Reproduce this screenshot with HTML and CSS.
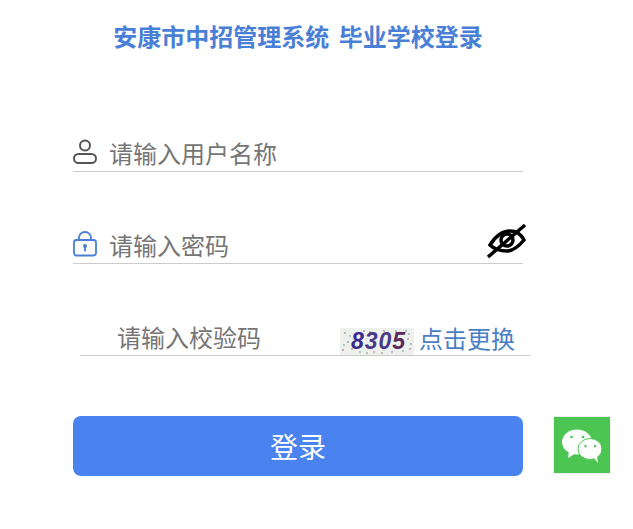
FILE: index.html
```html
<!DOCTYPE html>
<html lang="zh-CN">
<head>
    <meta charset="UTF-8">
    <title>安康市中招管理系统 毕业学校登录</title>
    <link rel="stylesheet" href="styles.css">
</head>
<body>

<h1 class="title">安康市中招管理系统 毕业学校登录</h1>

<div class="field field-user">
    <svg class="field-icon" width="24" height="26" viewBox="0 0 24 26" fill="none" stroke="#555" stroke-width="2">
        <circle cx="12" cy="6.500" r="5"/>
        <rect x="1" y="15" width="22" height="9" rx="4.500"/>
    </svg>
    <span class="placeholder">请输入用户名称</span>
</div>

<div class="field field-pass">
    <svg class="field-icon" width="24" height="26" viewBox="0 0 24 26" fill="none" stroke="#4a7fd8" stroke-width="1.8">
        <path d="M6 9V6.500a6 5.500 0 0 1 12 0V9"/>
        <rect x="1" y="9" width="22" height="15.500" rx="2.500"/>
        <circle cx="12" cy="15" r="2" fill="#4a7fd8" stroke="none"/>
        <path d="M12 16V20.500"/>
    </svg>
    <span class="placeholder">请输入密码</span>
    <svg class="eye" width="42" height="36" viewBox="0 0 42 36" fill="none" stroke="#000">
        <path d="M4 22C9 14 16 8 24 8c6 0 11 3 14 9-5 6-10 11-17 11-7 0-13-2-17-6z" stroke-width="3.500"/>
        <circle cx="21" cy="17" r="6" stroke-width="3.500"/>
        <path d="M2 34L39 2" stroke-width="3.500"/>
    </svg>
</div>

<div class="field field-code">
    <span class="placeholder">请输入校验码</span>
    <div class="captcha">
        <svg class="captcha-noise" width="74" height="27" viewBox="0 0 74 27">
            <g fill="#b79fa8">
                <circle cx="5" cy="5" r="1"/><circle cx="12" cy="21" r="1"/><circle cx="8" cy="14" r="1"/>
                <circle cx="3" cy="22" r="1"/><circle cx="17" cy="6" r="1"/><circle cx="24" cy="3" r="1"/>
                <circle cx="34" cy="24" r="1"/><circle cx="44" cy="3" r="1"/><circle cx="52" cy="24" r="1"/>
                <circle cx="60" cy="5" r="1"/><circle cx="68" cy="11" r="1"/><circle cx="70" cy="21" r="1"/>
            </g>
            <g fill="#9fb79f">
                <circle cx="66" cy="3" r="1"/><circle cx="63" cy="23" r="1"/><circle cx="30" cy="4" r="1"/>
                <circle cx="20" cy="24" r="1"/><circle cx="15" cy="12" r="1"/><circle cx="71" cy="16" r="1"/>
                <circle cx="10" cy="8" r="1"/><circle cx="4" cy="17" r="1"/><circle cx="42" cy="25" r="1"/>
                <circle cx="56" cy="3" r="1"/><circle cx="69" cy="6" r="1"/><circle cx="27" cy="25" r="1"/>
            </g>
        </svg>
        <span class="captcha-text"><span class="digit-a">8</span><span class="digit-b">3</span><span class="digit-b">0</span><span class="digit-c">5</span></span>
    </div>
    <a class="refresh">点击更换</a>
</div>

<div class="login-row">
    <button class="login-btn">登录</button>
    <div class="wechat">
        <svg width="56" height="56" viewBox="0 0 56 56">
            <ellipse cx="23" cy="25" rx="15" ry="12.500" fill="#fff"/>
            <path d="M15 34l-1 7 8-5z" fill="#fff"/>
            <ellipse cx="36" cy="32" rx="12" ry="10.500" fill="#fff" stroke="#4dc552" stroke-width="1"/>
            <path d="M40 41l4 5-1-7z" fill="#fff"/>
            <circle cx="17.500" cy="20" r="1.300" fill="#4dc552"/>
            <circle cx="29" cy="20" r="1.300" fill="#4dc552"/>
            <circle cx="31.500" cy="29" r="1.200" fill="#4dc552"/>
            <circle cx="41" cy="29" r="1.200" fill="#4dc552"/>
        </svg>
    </div>
</div>

</body>
</html>
```

FILE: styles.css
```css
body {
    margin: 0;
    background-color: #fff;
    font-family: "Microsoft YaHei", "Noto Sans CJK SC", sans-serif;
    color: #757575;
}
.title {
    width: 596px;
    margin: 0;
    padding-top: 20px;
    height: 41px;
    line-height: 32px;
    font-size: 24px;
    font-weight: bold;
    word-spacing: 4px;
    color: #4a7fd8;
    text-align: center;
}
.field {
    position: relative;
    display: flex;
    align-items: center;
    width: 450px;
    height: 40px;
    margin-left: 73px;
    border-bottom: 1px solid #ccc;
    font-size: 24px;
}
.field-user {
    margin-top: 70px;
}
.field-pass {
    margin-top: 51px;
}
.field-code {
    margin-top: 51px;
    margin-left: 80px;
}
.field-icon {
    flex: none;
    margin-top: 2px;
    margin-right: 12px;
}
.placeholder {
    line-height: 34px;
    padding-top: 4px;
}
.field-code .placeholder {
    width: 223px;
    margin-left: 37px;
    flex: none;
}
.eye {
    position: absolute;
    right: -5px;
    top: 0;
}
.captcha {
    position: relative;
    display: flex;
    justify-content: center;
    width: 74px;
    height: 27px;
    align-self: flex-end;
    background-color: #eef0ee;
    flex: none;
}
.captcha-noise {
    position: absolute;
    left: 0;
    top: 0;
}
.captcha-text {
    position: relative;
    padding-left: 3px;
    font-family: "Liberation Sans", sans-serif;
    font-size: 23px;
    line-height: 27px;
    font-style: italic;
    font-weight: bold;
    letter-spacing: 1px;
}
.digit-a {
    color: #3a2a90;
}
.digit-b {
    color: #4a3a8a;
}
.digit-c {
    color: #5a2a5a;
}
.refresh {
    margin-left: 5px;
    padding-top: 4px;
    color: #4a7fc4;
}
.login-row {
    display: flex;
    align-items: center;
    margin: 60px 0 0 73px;
}
.login-btn {
    width: 450px;
    height: 60px;
    border: none;
    border-radius: 8px;
    background-color: #4a82f0;
    color: #fff;
    font-family: inherit;
    font-size: 28px;
}
.wechat {
    width: 56px;
    height: 56px;
    margin-left: 31px;
    margin-bottom: 2px;
    background-color: #4dc552;
    box-shadow: 0 0 1px #999;
}
```
